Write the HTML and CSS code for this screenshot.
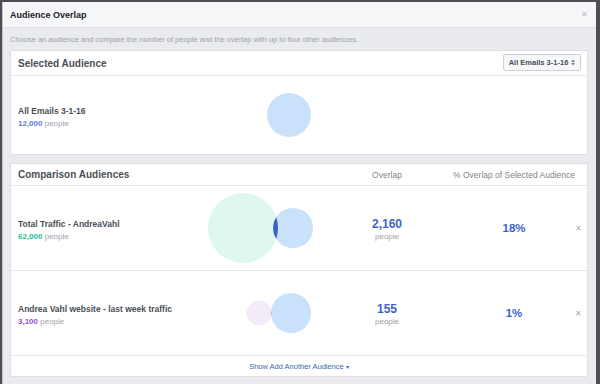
FILE: index.html
```html
<!DOCTYPE html>
<html lang="en">
<head>
  <meta charset="UTF-8" />
  <title>Audience Overlap</title>
  <link rel="stylesheet" href="styles.css">
</head>
<body>

  <div class="modal">
    <div class="modal-head">
      <span class="modal-title">Audience Overlap</span>
      <span class="modal-close">&#x2715;</span>
    </div>

    <p class="intro">Choose an audience and compare the number of people and the overlap with up to four other audiences.</p>

    <!-- === Selected audience === -->
    <section class="card">
      <div class="card-head">
        <h2>Selected Audience</h2>
        <button class="picker">All Emails 3-1-16
          <svg class="caret" width="4" height="7" viewBox="0 0 4 7">
            <path d="M0 3 L2 0.5 L4 3 Z M0 4 L2 6.5 L4 4 Z" fill="#7f8389"/>
          </svg>
        </button>
      </div>
      <div class="row row-selected">
        <div class="name">
          <strong>All Emails 3-1-16</strong>
          <span><b class="num-blue">12,000</b> people</span>
        </div>
        <svg class="venn" width="116" height="78" viewBox="0 0 116 78">
          <circle cx="89" cy="39" r="22" fill="#c9e1fb"/>
        </svg>
      </div>
    </section>

    <!-- === Comparison audiences === -->
    <section class="card">
      <div class="row row-head">
        <h2>Comparison Audiences</h2>
        <span class="col-title col-overlap">Overlap</span>
        <span class="col-title col-pct">% Overlap of Selected Audience</span>
      </div>

      <div class="row">
        <div class="name">
          <strong>Total Traffic - AndreaVahl</strong>
          <span><b class="num-teal">62,000</b> people</span>
        </div>
        <svg class="venn" width="116" height="84" viewBox="0 0 116 84">
          <circle cx="43" cy="42" r="35" fill="#e0f7ef"/>
          <circle cx="93" cy="42" r="20" fill="#c9e1fb"/>
          <path d="M76.25 31.1 A35 35 0 0 1 76.25 52.9 A20 20 0 0 1 76.25 31.1 Z" fill="#3a60cc"/>
        </svg>
        <div class="overlap">
          <b>2,160</b>
          <span>people</span>
        </div>
        <div class="pct">18%</div>
        <span class="remove">&#x2715;</span>
      </div>

      <div class="row">
        <div class="name">
          <strong>Andrea Vahl website - last week traffic</strong>
          <span><b class="num-purple">3,100</b> people</span>
        </div>
        <svg class="venn" width="116" height="83" viewBox="0 0 116 83">
          <circle cx="59" cy="41" r="12.5" fill="#f3ebf8"/>
          <circle cx="91" cy="41" r="20" fill="#c9e1fb"/>
          <path d="M71.2 38.5 A12.5 12.5 0 0 1 71.2 43.5 A20 20 0 0 1 71.2 38.5 Z" fill="#3a60cc"/>
        </svg>
        <div class="overlap">
          <b>155</b>
          <span>people</span>
        </div>
        <div class="pct">1%</div>
        <span class="remove">&#x2715;</span>
      </div>

      <div class="card-foot">
        <a href="#">Show Add Another Audience <span class="caret-down">&#x25BE;</span></a>
      </div>
    </section>
  </div>

</body>
</html>
```

FILE: styles.css
```css
:root {
  --text: #4b4f56;
  --muted: #90949c;
  --line: #dddfe2;
  --blue: #3e63c9;
}

* {
  margin: 0;
  padding: 0;
  box-sizing: border-box;
}

html, body {
  height: 384px;
  overflow: hidden;
}

body {
  background-color: #4e4f52;
  padding: 2px 4px 0 2px;
  font-family: "Liberation Sans", Arial, sans-serif;
  color: var(--text);
}

.modal {
  background-color: #e9ebee;
  border-left: 1px solid #c4c6ca;
  height: 100%;
}

.modal-head {
  height: 26px;
  background-color: #f6f7f9;
  border-bottom: 1px solid var(--line);
  display: flex;
  align-items: center;
  justify-content: space-between;
  padding: 0 8px 0 7px;
}

.modal-title {
  font-size: 9px;
  font-weight: bold;
  color: #1d2129;
}

.modal-close {
  font-size: 8px;
  color: #b4b8bf;
}

.intro {
  font-size: 7.5px;
  line-height: 11px;
  color: #9ea2a9;
  padding: 6px 0 5px 7px;
}

.card {
  background-color: #fff;
  border: 1px solid var(--line);
  border-radius: 2px;
  margin: 0 8px 8px 7px;
}

.card h2 {
  font-size: 10px;
  font-weight: bold;
  color: var(--text);
}

.card-head {
  height: 25px;
  border-bottom: 1px solid #e5e6e9;
  display: flex;
  align-items: center;
  justify-content: space-between;
  padding: 0 6px 0 7px;
}

.picker {
  height: 17px;
  width: 78px;
  margin-top: -2px;
  background-color: #f6f7f9;
  border: 1px solid #ced0d4;
  border-radius: 2px;
  font-family: inherit;
  font-size: 7.5px;
  font-weight: bold;
  color: var(--text);
  display: flex;
  align-items: center;
  justify-content: center;
  gap: 3px;
}

.caret {
  display: block;
}

/* === shared grid for rows === */
.row {
  display: grid;
  grid-template-columns: 182px 116px 142px 112px 17px;
  align-items: center;
  padding-left: 7px;
  height: 85px;
  border-bottom: 1px solid #e5e6e9;
}

.row-selected {
  height: 78px;
  border-bottom: 0;
}

.row-head {
  height: 22px;
}

.col-title {
  font-size: 8.5px;
  color: #7f8389;
  justify-self: center;
  white-space: nowrap;
}

.col-overlap { grid-column: 3; }
.col-pct { grid-column: 4; }

.name {
  display: flex;
  flex-direction: column;
  gap: 1px;
  margin-top: 4px;
  white-space: nowrap;
}

.name strong {
  font-size: 8.5px;
  line-height: 11px;
  color: var(--text);
}

.name span {
  font-size: 8px;
  line-height: 11px;
  color: #9ea2a9;
}

.num-blue { color: #5b80d9; }
.num-teal { color: #23c29b; }
.num-purple { color: #9a4fd0; }

.venn {
  display: block;
}

.overlap {
  display: flex;
  flex-direction: column;
  align-items: center;
  margin-top: 3px;
}

.overlap b {
  font-size: 12px;
  line-height: 14px;
  color: var(--blue);
}

.overlap span {
  font-size: 8px;
  line-height: 12px;
  color: #9ea2a9;
}

.pct {
  text-align: center;
  font-size: 11.5px;
  font-weight: bold;
  color: var(--blue);
}

.remove {
  font-size: 8px;
  color: #a7abb2;
  text-align: center;
}

.card-foot {
  height: 20px;
  display: flex;
  align-items: center;
  justify-content: center;
}

.card-foot a {
  font-size: 7.5px;
  color: #4267b2;
  text-decoration: none;
}

.caret-down {
  font-size: 6px;
}
```
